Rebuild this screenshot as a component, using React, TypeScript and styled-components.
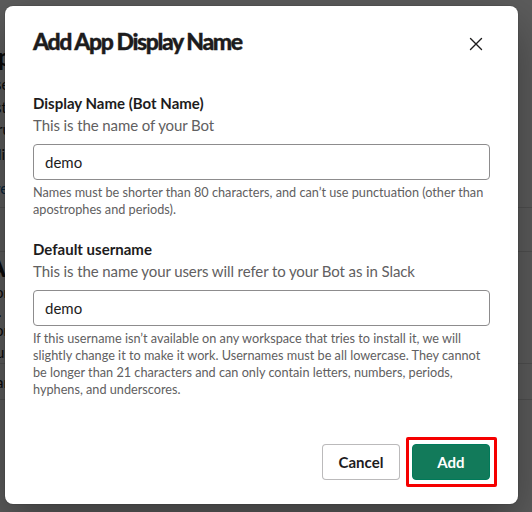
import React from "react";
import styled, { createGlobalStyle } from "styled-components";

const GlobalStyle = createGlobalStyle`
  html, body {
    margin: 0;
    padding: 0;
    background: #ffffff;
  }
  body {
    font-family: Lato, "Noto Sans", "Liberation Sans", sans-serif;
    color: #1d1c1d;
    -webkit-font-smoothing: antialiased;
  }
  * {
    box-sizing: border-box;
  }
`;

const Screen = styled.div`
  position: relative;
  width: 532px;
  height: 512px;
  overflow: hidden;
  background: #ffffff;
`;

/* the settings page that sits behind the dimmed overlay */
const BackPage = styled.div`
  display: flex;
  flex-direction: column;
  padding-top: 40px;
`;

const BackRow = styled.div<{ h: number; line?: boolean }>`
  display: flex;
  justify-content: space-between;
  align-items: center;
  height: ${(p) => p.h}px;
  border-bottom: ${(p) => (p.line ? "1px solid #dddddd" : "none")};
  white-space: nowrap;
`;

const BackText = styled.span<{ size?: number; bold?: boolean; blue?: boolean; shift?: number }>`
  font-size: ${(p) => p.size || 15}px;
  font-weight: ${(p) => (p.bold ? 900 : 400)};
  color: ${(p) => (p.blue ? "#1264a3" : "#1d1c1d")};
  margin-left: ${(p) => p.shift || 0}px;
`;

const BackRight = styled.span<{ shift?: number }>`
  font-size: 15px;
  color: #1d1c1d;
  margin-right: ${(p) => p.shift || 0}px;
`;

const Overlay = styled.div`
  position: absolute;
  top: 0;
  left: 0;
  right: 0;
  bottom: 0;
  background: rgba(0, 0, 0, 0.64);
  padding: 6px 14px 8px 5px;
  display: flex;
`;

const Modal = styled.div`
  flex: 1;
  background: #ffffff;
  border-radius: 8px;
  display: flex;
  flex-direction: column;
  box-shadow: 0 0 0 1px rgba(29, 28, 29, 0.13), 0 18px 48px rgba(0, 0, 0, 0.35);
`;

const Header = styled.div`
  display: flex;
  align-items: flex-start;
  justify-content: space-between;
  padding: 19px 24px 0 28px;
`;

const Title = styled.h1`
  margin: 0;
  font-size: 23px;
  line-height: 32px;
  font-weight: 900;
  letter-spacing: -1.4px;
  color: #1d1c1d;
  -webkit-text-stroke: 0.35px #1d1c1d;
`;

const CloseButton = styled.button`
  width: 36px;
  height: 36px;
  border: none;
  background: none;
  padding: 0;
  display: flex;
  align-items: center;
  justify-content: center;
  color: #1d1c1d;
  margin-top: 1px;
`;

const Body = styled.div`
  flex: 1;
  padding: 30px 28px 0;
  display: flex;
  flex-direction: column;
  gap: 21px;
`;

const Field = styled.div`
  display: flex;
  flex-direction: column;
`;

const Label = styled.label`
  font-size: 15px;
  line-height: 22px;
  font-weight: 700;
  color: #1d1c1d;
`;

const Hint = styled.div`
  font-size: 15px;
  line-height: 22px;
  letter-spacing: -0.1px;
  color: #616061;
  margin-bottom: 8px;
`;

const Input = styled.input`
  height: 36px;
  width: 100%;
  border: 1px solid #8d8c8d;
  border-radius: 4px;
  padding: 0 11px;
  font-family: inherit;
  font-size: 15px;
  color: #1d1c1d;
  background: #ffffff;
  outline: none;
`;

const Help = styled.div`
  margin-top: 4px;
  font-size: 12.7px;
  line-height: 16.7px;
  color: #616061;
  white-space: nowrap;
`;

const Footer = styled.div`
  display: flex;
  justify-content: flex-end;
  gap: 12px;
  padding: 0 28px 24px;
`;

const Button = styled.button<{ primary?: boolean }>`
  height: 36px;
  min-width: 78px;
  padding: 0 12px;
  border-radius: 4px;
  font-family: inherit;
  font-size: 15px;
  font-weight: 700;
  cursor: pointer;
  border: 1px solid ${(p) => (p.primary ? "#007a5a" : "rgba(29, 28, 29, 0.3)")};
  background: ${(p) => (p.primary ? "#127a5a" : "#ffffff")};
  color: ${(p) => (p.primary ? "#ffffff" : "#1d1c1d")};
`;

const Highlight = styled.div`
  position: relative;
  display: flex;
  &::after {
    content: "";
    position: absolute;
    top: -7px;
    bottom: -7px;
    left: -6px;
    right: -7px;
    border: 3px solid #f50000;
    border-radius: 2px;
    pointer-events: none;
  }
`;

function CloseIcon() {
  return (
    <svg width="14" height="14" viewBox="0 0 14 14" fill="none">
      <path d="M1.5 1.5L12.5 12.5M12.5 1.5L1.5 12.5" stroke="currentColor" strokeWidth="1.4" strokeLinecap="round" />
    </svg>
  );
}

export default function App() {
  return (
    <Screen>
      <GlobalStyle />
      <BackPage>
        <BackRow h={32}>
          <BackText size={24} bold shift={-19}>App</BackText>
        </BackRow>
        <BackRow h={24}>
          <BackText shift={-5}>settings</BackText>
        </BackRow>
        <BackRow h={22}>
          <BackText shift={-5}>status</BackText>
        </BackRow>
        <BackRow h={22}>
          <BackText shift={-3}>run</BackText>
        </BackRow>
        <BackRow h={28}>
          <BackText shift={-2}>list</BackText>
        </BackRow>
        <BackRow h={40} line>
          <BackText blue shift={-5}>read more</BackText>
        </BackRow>
        <BackRow h={44} line>
          <BackText shift={-3}> </BackText>
        </BackRow>
        <BackRow h={30}>
          <BackText size={24} bold shift={-11}>Add</BackText>
        </BackRow>
        <BackRow h={20}>
          <BackText shift={-5}>org</BackText>
          <BackRight shift={-28}>bar</BackRight>
        </BackRow>
        <BackRow h={18}>
          <BackText shift={-2}>.</BackText>
        </BackRow>
        <BackRow h={20}>
          <BackText shift={-5}>one</BackText>
        </BackRow>
        <BackRow h={24} line>
          <BackText shift={-4}>url</BackText>
          <BackRight shift={-30}>use</BackRight>
        </BackRow>
        <BackRow h={36} line>
          <BackText shift={-4}>area</BackText>
        </BackRow>
      </BackPage>

      <Overlay>
        <Modal role="dialog" aria-label="Add App Display Name">
          <Header>
            <Title>Add App Display Name</Title>
            <CloseButton aria-label="Close">
              <CloseIcon />
            </CloseButton>
          </Header>
          <Body>
            <Field>
              <Label>Display Name (Bot Name)</Label>
              <Hint>This is the name of your Bot</Hint>
              <Input defaultValue="demo" />
              <Help>
                Names must be shorter than 80 characters, and can’t use punctuation (other than
                <br />
                apostrophes and periods).
              </Help>
            </Field>
            <Field>
              <Label>Default username</Label>
              <Hint>This is the name your users will refer to your Bot as in Slack</Hint>
              <Input defaultValue="demo" />
              <Help>
                If this username isn’t available on any workspace that tries to install it, we will
                <br />
                slightly change it to make it work. Usernames must be all lowercase. They cannot
                <br />
                be longer than 21 characters and can only contain letters, numbers, periods,
                <br />
                hyphens, and underscores.
              </Help>
            </Field>
          </Body>
          <Footer>
            <Button>Cancel</Button>
            <Highlight>
              <Button primary>Add</Button>
            </Highlight>
          </Footer>
        </Modal>
      </Overlay>
    </Screen>
  );
}
